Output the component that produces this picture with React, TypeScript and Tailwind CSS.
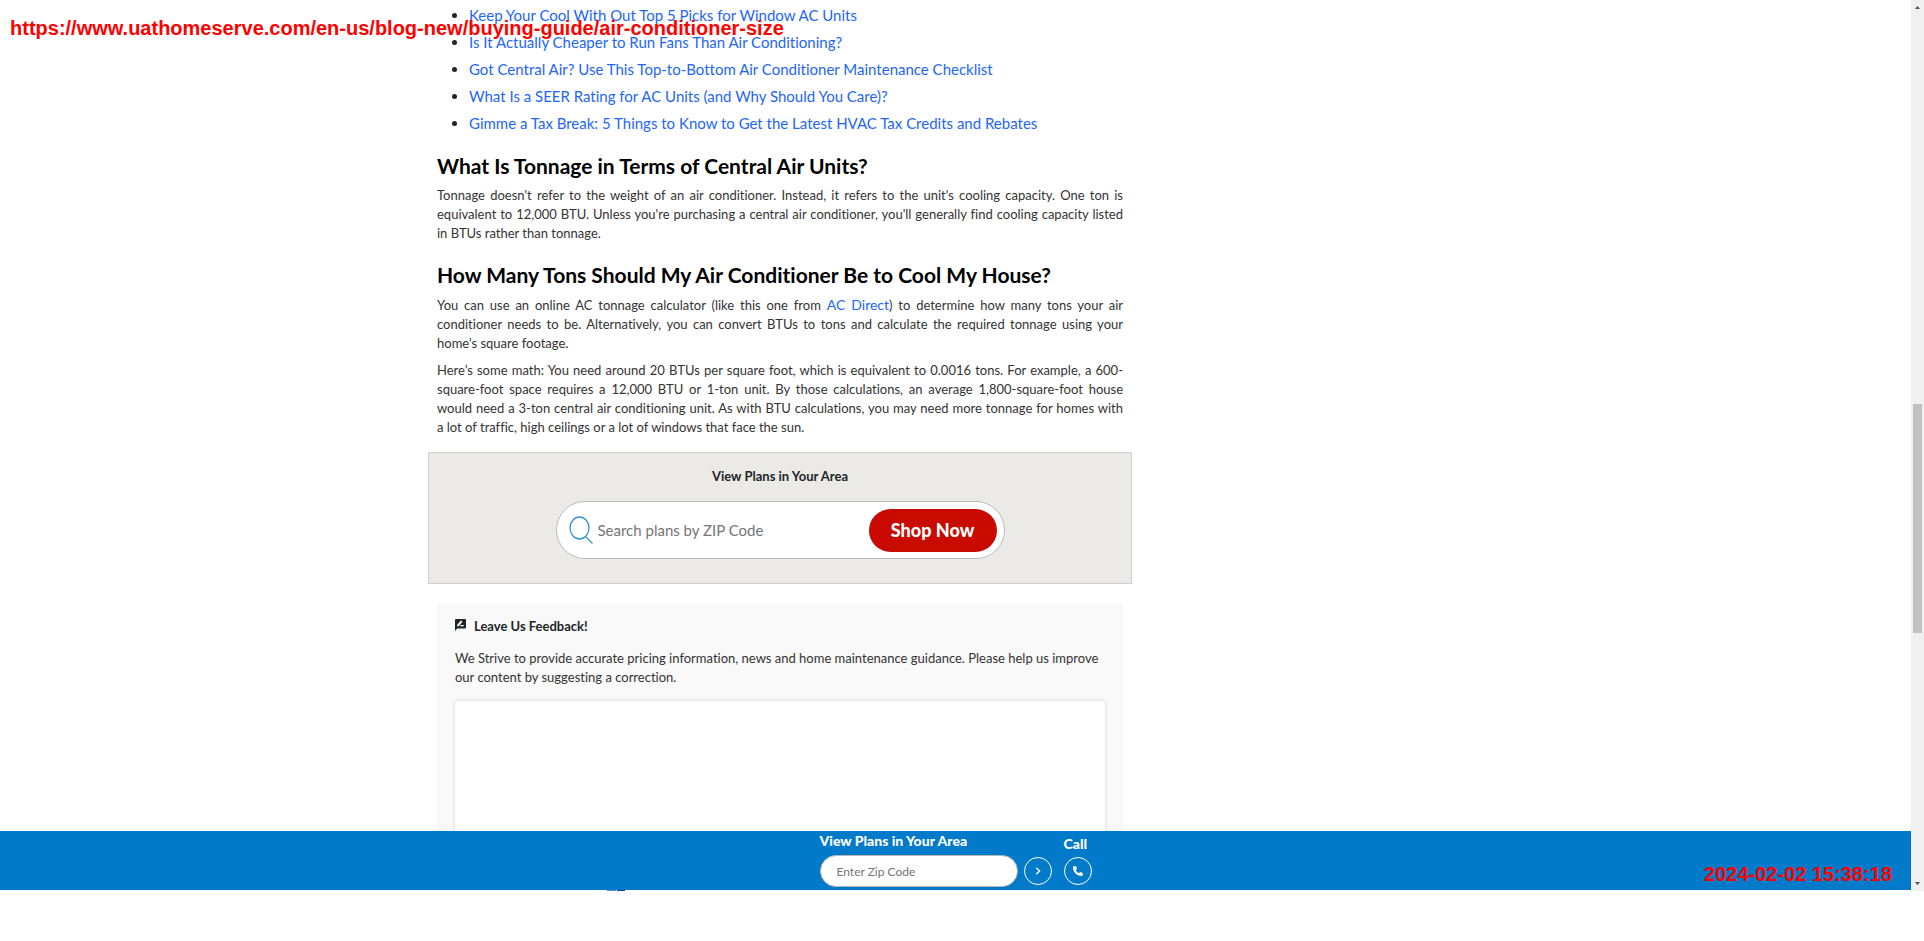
import React from "react";

const articles = [
  "Keep Your Cool With Out Top 5 Picks for Window AC Units",
  "Is It Actually Cheaper to Run Fans Than Air Conditioning?",
  "Got Central Air? Use This Top-to-Bottom Air Conditioner Maintenance Checklist",
  "What Is a SEER Rating for AC Units (and Why Should You Care)?",
  "Gimme a Tax Break: 5 Things to Know to Get the Latest HVAC Tax Credits and Rebates",
];

function RelatedLinks() {
  return (
    <ul className="list-disc pt-[2px] pl-8 text-[15px] leading-[27px] text-[#212529]">
      {articles.map((title) => (
        <li key={title}>
          <a href="#" className="text-[#1e66f5]">{title}</a>
        </li>
      ))}
    </ul>
  );
}

function Heading({ children }: { children: React.ReactNode }) {
  return <h2 className="mt-[13px] text-[21px] leading-8 font-bold text-black">{children}</h2>;
}

function Paragraph({ children }: { children: React.ReactNode }) {
  return <p className="text-justify text-[13px] leading-[19px] text-[#333]">{children}</p>;
}

function PlanSearch() {
  return (
    <section className="-mx-[9px] mt-[15px] flex flex-col items-center border border-[#cfcfcf] bg-[#ebeae6] pt-[13px] pb-6">
      <label htmlFor="zip-search" className="text-[13px] leading-5 font-bold text-[#212529]">
        View Plans in Your Area
      </label>
      <form className="mt-[15px] flex h-[58px] w-[449px] items-center rounded-full border border-[#bcbcbc] bg-white pr-[7px] pl-3">
        <svg viewBox="0 0 24 28" className="h-7 w-6 shrink-0" fill="none" stroke="#3b94cf" strokeWidth="1.3">
          <ellipse cx="10.5" cy="12" rx="9.5" ry="11" />
          <path d="M16.5 20.5 L23.5 27.5" />
        </svg>
        <input
          id="zip-search"
          placeholder="Search plans by ZIP Code"
          className="min-w-0 flex-1 pl-[5px] text-[15px] outline-none placeholder:text-[#757575]"
        />
        <button type="button" className="h-[43px] w-32 rounded-full bg-[#c80a00] text-[18px] font-black text-white">
          Shop Now
        </button>
      </form>
    </section>
  );
}

function Feedback() {
  return (
    <section className="mt-[19px] bg-[#f9f9f9] px-[18px] pt-[13px] pb-10">
      <h3 className="flex items-center gap-2 text-[13px] leading-5 font-bold text-[#212529]">
        <svg viewBox="2 2 20 20" preserveAspectRatio="none" className="mb-[3px] h-3 w-[11px]" fill="#212529">
          <path d="M20 2H4c-1.100 0-2 .9-2 2v18l4-4h14c1.100 0 2-.9 2-2V4c0-1.100-.9-2-2-2zM6 14v-2.470l6.880-6.880c.2-.2.510-.2.710 0l1.770 1.770c.2.2.2.510 0 .710L8.470 14H6zm12 0h-7.500l2-2H18v2z" />
        </svg>
        Leave Us Feedback!
      </h3>
      <p className="mt-[13px] text-[13px] leading-[19px] text-[#333]">
        We Strive to provide accurate pricing information, news and home maintenance guidance. Please help us improve
        our content by suggesting a correction.
      </p>
      <textarea
        aria-label="Suggest a correction"
        className="mt-[14px] block h-60 w-full resize-none rounded-[3px] bg-white shadow-[0_0_4px_rgba(0,0,0,0.16)] outline-none"
      />
    </section>
  );
}

function StickyBar() {
  return (
    <div className="flex h-[59px] shrink-0 justify-center gap-3 bg-[#007ac9] text-white">
      <form className="flex flex-col">
        <label htmlFor="zip-bar" className="text-[14px] leading-5 font-black">
          View Plans in Your Area
        </label>
        <div className="mt-1 flex items-center gap-[6px]">
          <input
            id="zip-bar"
            placeholder="Enter Zip Code"
            className="h-8 w-[198px] rounded-full border border-[#b5b5b5] bg-white px-4 text-[12px] text-black outline-none placeholder:text-[#757575]"
          />
          <button type="button" aria-label="Search" className="flex size-7 items-center justify-center rounded-full border border-white">
            <svg viewBox="0 0 8 8" className="size-2" fill="none" stroke="white" strokeWidth="1.4">
              <path d="M2.200 .8 L5.600 4 L2.200 7.200" />
            </svg>
          </button>
        </div>
      </form>
      <div className="flex flex-col">
        <span className="pt-[3px] text-[14px] leading-5 font-black">Call</span>
        <a href="#" aria-label="Call" className="mt-[3px] flex size-7 items-center justify-center rounded-full border border-white">
          <svg viewBox="3 3 18 18" className="size-[10px]" fill="white">
            <path d="M8.500 3.500 L5 3.200 Q3 4 3 6 C3.500 14 10 20.500 18 21 Q20 21 20.800 19 L20.500 15.500 L15.700 14 L13.500 16 Q9.500 14 8 10.500 L10 8.300 Z" />
          </svg>
        </a>
      </div>
    </div>
  );
}

function Scrollbar() {
  return (
    <div className="flex w-[13px] shrink-0 flex-col items-center justify-between bg-[#f0f0f0] py-[6px]">
      <svg viewBox="0 0 5 3" className="h-[3px] w-[5px]" fill="#505050">
        <path d="M0 3 L2.500 0 L5 3 Z" />
      </svg>
      <div className="flex w-full grow justify-center pt-[395px]">
        <div className="h-[229px] w-[9px] bg-[#c1c1c1]" />
      </div>
      <svg viewBox="0 0 5 3" className="h-[3px] w-[5px]" fill="#505050">
        <path d="M0 0 L2.500 3 L5 0 Z" />
      </svg>
    </div>
  );
}

export default function App() {
  return (
    <div className="relative flex h-screen flex-col bg-white pb-[50px] font-['Lato',sans-serif] [font-variant-ligatures:no-common-ligatures]">
      <div className="flex min-h-0 flex-1">
        <div className="flex min-w-0 flex-1 flex-col">
          <main className="min-h-0 w-full flex-1 overflow-hidden">
            <div className="mx-auto max-w-[1037px]">
              <article className="max-w-[686px]">
                <RelatedLinks />
                <Heading>What Is Tonnage in Terms of Central Air Units?</Heading>
                <div className="mt-1 pb-[3px]">
                  <Paragraph>
                    Tonnage doesn't refer to the weight of an air conditioner. Instead, it refers to the unit's cooling
                    capacity. One ton is equivalent to 12,000 BTU. Unless you're purchasing a central air conditioner,
                    you'll generally find cooling capacity listed in BTUs rather than tonnage.
                  </Paragraph>
                </div>
                <Heading>How Many Tons Should My Air Conditioner Be to Cool My House?</Heading>
                <div className="mt-1 flex flex-col gap-2">
                  <Paragraph>
                    You can use an online AC tonnage calculator (like this one from{" "}
                    <a href="#" className="text-[14px] text-[#1e66f5]">AC Direct</a>) to determine how many tons your air
                    conditioner needs to be. Alternatively, you can convert BTUs to tons and calculate the required
                    tonnage using your home's square footage.
                  </Paragraph>
                  <Paragraph>
                    Here’s some math: You need around 20 BTUs per square foot, which is equivalent to 0.0016 tons. For
                    example, a 600-square-foot space requires a 12,000 BTU or 1-ton unit. By those calculations, an
                    average 1,800-square-foot house would need a 3-ton central air conditioning unit. As with BTU
                    calculations, you may need more tonnage for homes with a&nbsp;lot of traffic, high ceilings or a lot of
                    windows that face the sun.
                  </Paragraph>
                </div>
                <PlanSearch />
                <Feedback />
              </article>
            </div>
          </main>
          <StickyBar />
          <div className="flex h-px shrink-0 gap-px pl-[607px]">
            <span className="w-[9px] bg-[#4a90f2]" />
            <span className="w-[8px] bg-[#1c3aa9]" />
          </div>
        </div>
        <Scrollbar />
      </div>
      <span className="absolute top-4 left-[10px] font-['Liberation_Sans',sans-serif] text-[20px] leading-6 font-bold text-[#f00]">
        https://www.uathomeserve.com/en-us/blog-new/buying-guide/air-conditioner-size
      </span>
      <time className="absolute right-8 bottom-[55px] font-['Liberation_Sans',sans-serif] text-[20px] leading-6 font-bold text-[#f00]">
        2024-02-02 15:38:18
      </time>
    </div>
  );
}
